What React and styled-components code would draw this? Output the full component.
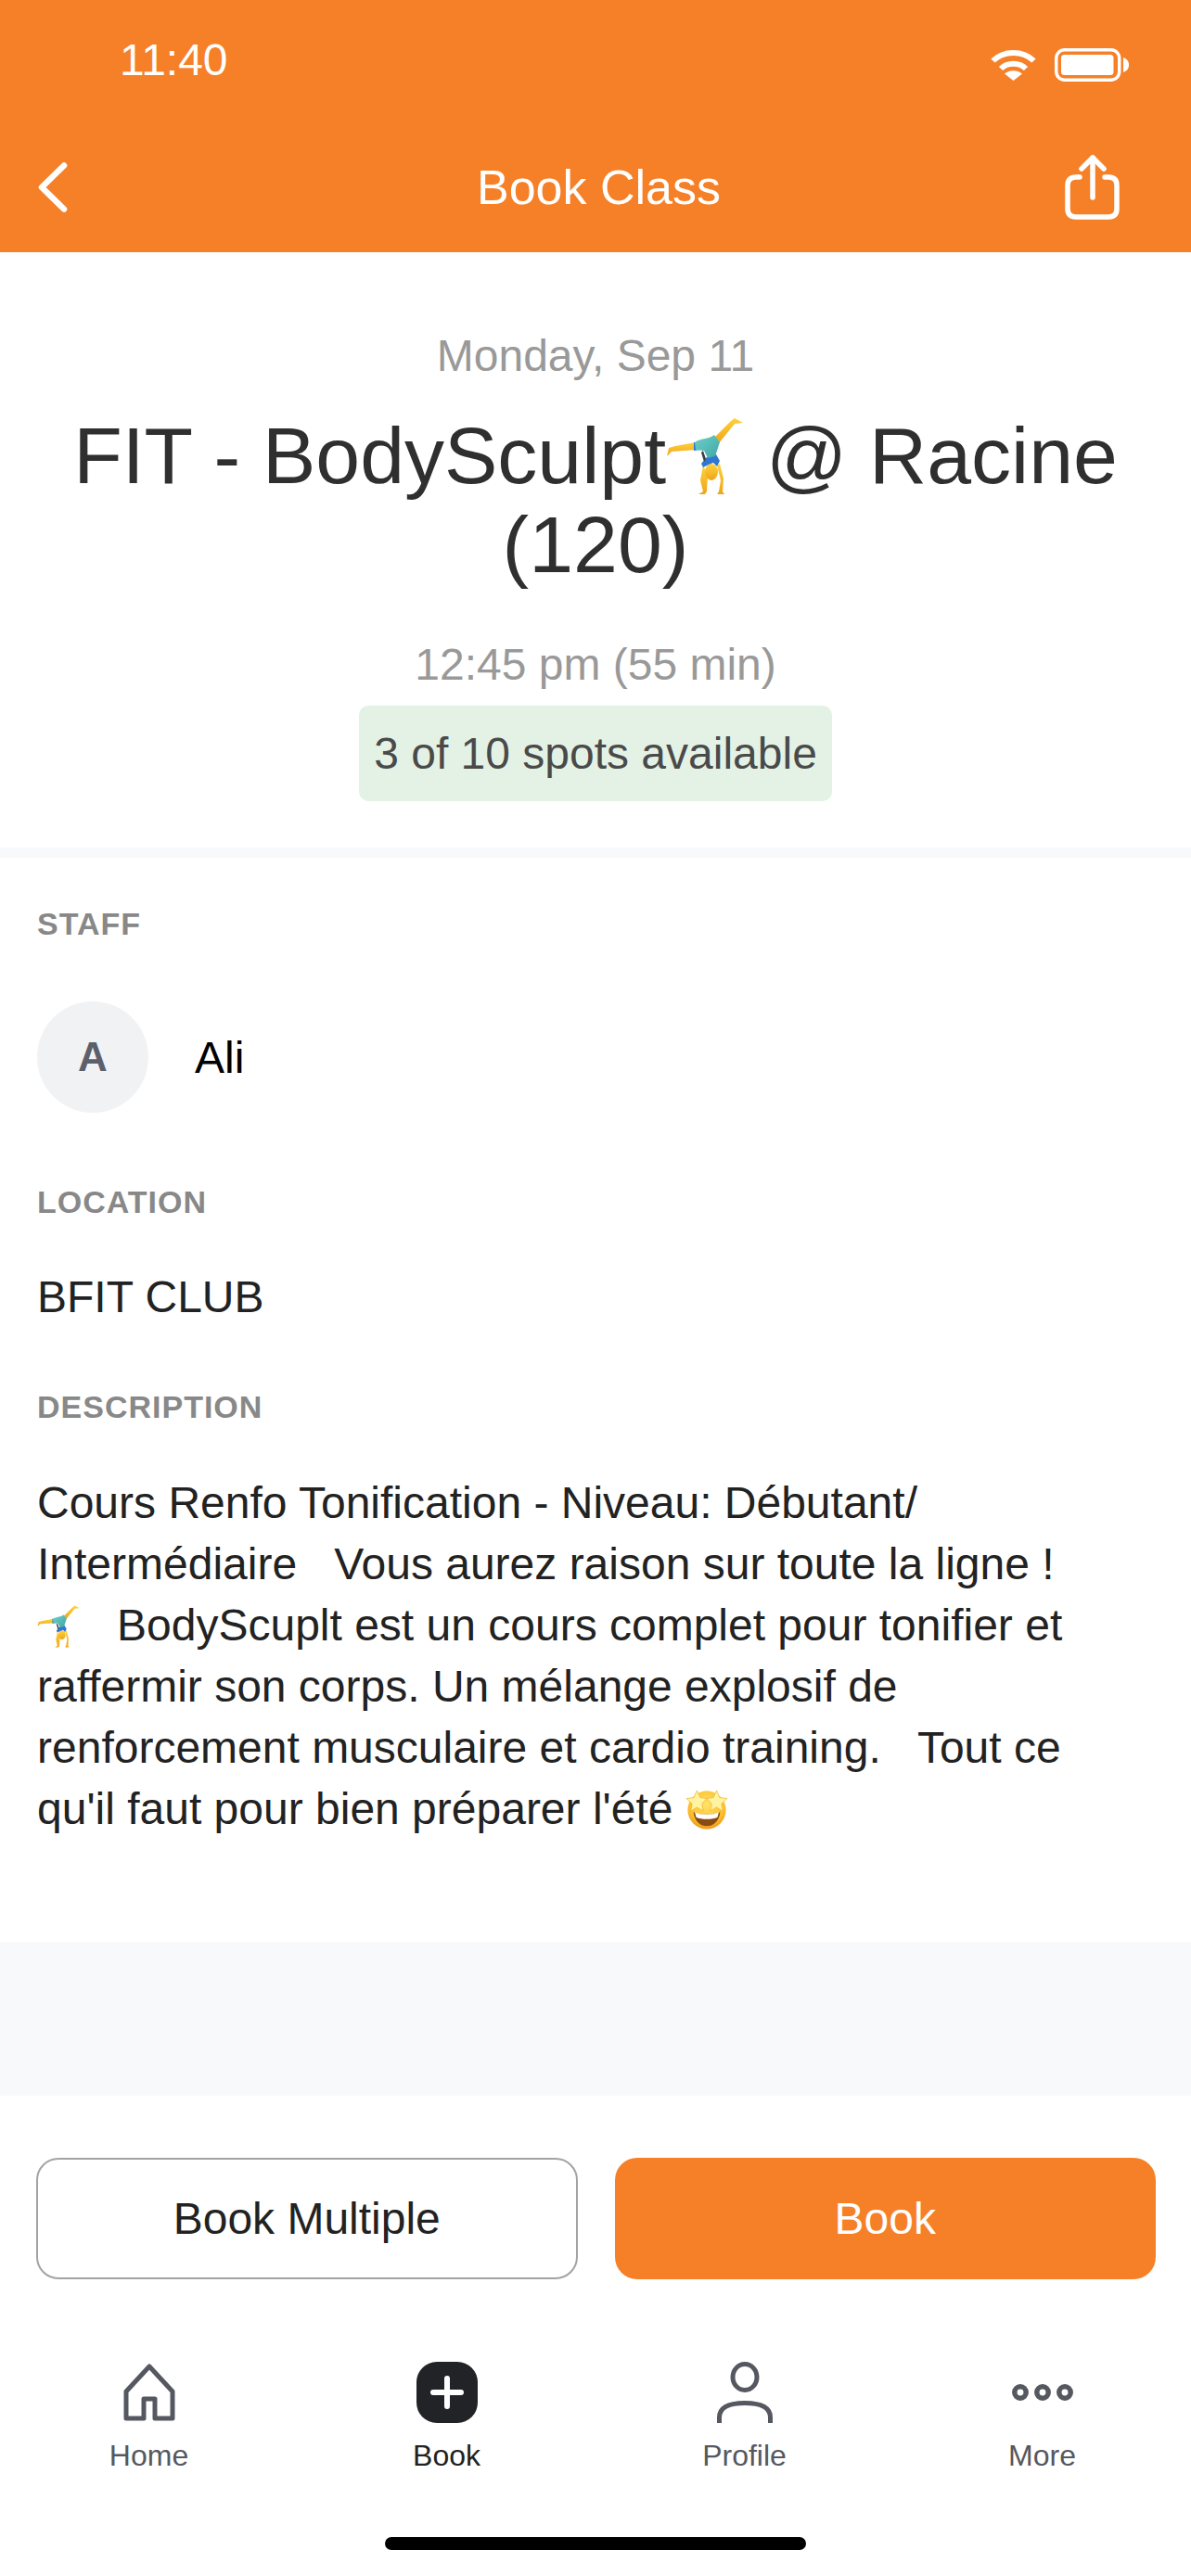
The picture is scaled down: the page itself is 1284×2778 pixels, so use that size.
import React from "react";
import styled, { createGlobalStyle } from "styled-components";

const Global = createGlobalStyle`
  html, body { margin: 0; padding: 0; background: #fff; }
  * { box-sizing: border-box; }
  body { font-family: "Liberation Sans", Arial, sans-serif; }
`;

const Page = styled.div`
  width: 1284px;
  height: 2778px;
  display: flex;
  flex-direction: column;
  background: #fff;
  overflow: hidden;
`;

const Header = styled.header`
  height: 272px;
  background: #f68028;
  color: #fff;
  display: flex;
  flex-direction: column;
`;

const StatusBar = styled.div`
  height: 132px;
  padding: 40px 67px 0 129px;
  display: flex;
  justify-content: space-between;
  align-items: flex-start;
`;

const Time = styled.span`
  font-size: 48px;
  line-height: 50px;
`;

const StatusIcons = styled.div`
  display: flex;
  align-items: center;
  gap: 20px;
  padding-top: 12px;
`;

const NavBar = styled.nav`
  flex: 1;
  display: grid;
  grid-template-columns: 1fr auto 1fr;
  align-items: center;
  padding: 0 34px 0 41px;
`;

const NavTitle = styled.h1`
  margin: 0;
  font-size: 52px;
  font-weight: 400;
  line-height: 60px;
`;

const NavSlot = styled.div`
  display: flex;
  justify-content: ${(p) => (p.$end ? "flex-end" : "flex-start")};
  padding-right: ${(p) => (p.$end ? 43 : 0)}px;
`;

const Hero = styled.section`
  padding: 84px 20px 50px;
  display: flex;
  flex-direction: column;
  align-items: center;
  text-align: center;
`;

const Muted = styled.div`
  font-size: 48px;
  line-height: 56px;
  color: #999;
  margin-top: ${(p) => p.$top || 0}px;
`;

const ClassTitle = styled.h2`
  margin: 31px 0 0;
  font-size: 86px;
  font-weight: 400;
  line-height: 96px;
  color: #2f2f2f;
`;

const Spots = styled.div`
  margin-top: 16px;
  height: 103px;
  width: 510px;
  border-radius: 10px;
  background: #e4f2e5;
  color: #4a4a4a;
  font-size: 48px;
  display: flex;
  align-items: center;
  justify-content: center;
`;

const Divider = styled.div`
  height: 11px;
  background: #f8f9fb;
`;

const Details = styled.section`
  padding: 51px 40px 110px;
  display: flex;
  flex-direction: column;
`;

const Label = styled.div`
  font-size: 34px;
  line-height: 40px;
  font-weight: 700;
  letter-spacing: 1px;
  color: #888;
  margin-top: ${(p) => p.$top || 0}px;
`;

const StaffRow = styled.div`
  margin-top: 64px;
  display: flex;
  align-items: center;
  gap: 50px;
`;

const Avatar = styled.div`
  width: 120px;
  height: 120px;
  border-radius: 50%;
  background: #f1f2f4;
  color: #5c606a;
  font-size: 44px;
  font-weight: 700;
  display: flex;
  align-items: center;
  justify-content: center;
`;

const StaffName = styled.span`
  font-size: 48px;
  color: #000;
`;

const Value = styled.div`
  margin-top: 53px;
  font-size: 48px;
  line-height: 60px;
  color: #222;
`;

const Paragraph = styled.p`
  margin: 51px 0 0;
  font-size: 48px;
  line-height: 66px;
  color: #222;
  white-space: pre;
`;

const EmojiIcon = styled.svg`
  display: inline-block;
  width: ${(p) => p.$size}px;
  height: ${(p) => p.$size}px;
  vertical-align: ${(p) => p.$align}px;
`;

const Filler = styled.div`
  height: 166px;
  background: #f8f9fb;
`;

const Actions = styled.div`
  padding: 67px 38px 0 39px;
  display: grid;
  grid-template-columns: 1fr 1fr;
  gap: 40px;
`;

const ActionButton = styled.button`
  height: 131px;
  border-radius: 24px;
  font-family: inherit;
  font-size: 48px;
  color: ${(p) => (p.$primary ? "#fff" : "#222")};
  background: ${(p) => (p.$primary ? "#f68028" : "#fff")};
  border: ${(p) => (p.$primary ? "none" : "2px solid #a3a3a3")};
`;

const TabBar = styled.div`
  margin-top: 89px;
  display: grid;
  grid-template-columns: repeat(4, 321px);
`;

const Tab = styled.div`
  display: flex;
  flex-direction: column;
  align-items: center;
  gap: 17px;
  color: ${(p) => (p.$active ? "#222" : "#555860")};
`;

const TabIconSlot = styled.div`
  height: 66px;
  display: flex;
  align-items: center;
  justify-content: center;
`;

const TabLabel = styled.span`
  font-size: 32px;
  line-height: 36px;
`;

const HomeIndicator = styled.div`
  width: 454px;
  height: 14px;
  border-radius: 7px;
  background: #000;
  margin: 70px auto 0;
`;

const Gymnast = ({ size, align }) => (
  <EmojiIcon $size={size} $align={align} viewBox="0 0 84 84" role="img" aria-label="person cartwheeling">
    <defs>
      <linearGradient id="skin" x1="0" y1="0" x2="0" y2="1">
        <stop offset="0" stopColor="#ffd23c" />
        <stop offset="1" stopColor="#eea51a" />
      </linearGradient>
      <linearGradient id="suit" x1="0" y1="0" x2="1" y2="1">
        <stop offset="0" stopColor="#6fd0c8" />
        <stop offset="1" stopColor="#3fa7a6" />
      </linearGradient>
    </defs>
    <path d="M52 22 L70 4 L74 1 L83 6 L74 7 L57 28 Z" fill="url(#skin)" />
    <path d="M32 27 L10 31 L3 33 L1 42 L6 37 L33 35 Z" fill="url(#skin)" />
    <path d="M40 52 L37 68 L40 80 L35 83 L42 83 L44 80 L45 62 Z" fill="url(#skin)" />
    <path d="M55 52 L59 68 L57 80 L55 83 L63 83 L61 80 L62 66 L58 50 Z" fill="url(#skin)" />
    <ellipse cx="49" cy="59" rx="7" ry="9" fill="url(#skin)" />
    <path d="M44 43 L38 50 L40 54 L46 51 L51 49 L55 53 L58 47 L54 40 Z" fill="#2f77d0" />
    <path d="M30 27 L30 36 L37 35 L34 27 Z" fill="#2f77d0" />
    <path d="M31 27 C38 22 46 24 52 19 L58 27 L53 42 L45 44 L41 36 L32 35 Z" fill="url(#suit)" />
    <path d="M40 36 L43 45 L41 48 L38 38 Z" fill="#3c3f44" />
  </EmojiIcon>
);

const StarStruck = ({ size, align }) => (
  <EmojiIcon $size={size} $align={align} viewBox="0 0 48 48" role="img" aria-label="star-struck">
    <defs>
      <radialGradient id="face" cx="0.5" cy="0.35" r="0.7">
        <stop offset="0" stopColor="#ffe46a" />
        <stop offset="0.7" stopColor="#fbbd2c" />
        <stop offset="1" stopColor="#ea8a12" />
      </radialGradient>
    </defs>
    <circle cx="24" cy="25" r="21.5" fill="url(#face)" />
    <path d="M9 27 C15 31 33 31 39 27 C38 38 31 43 24 43 C17 43 10 38 9 27 Z" fill="#8a4b10" />
    <path d="M10.5 27.5 C16 31 32 31 37.5 27.5 L36 33 C30 36 18 36 12 33 Z" fill="#fff" />
    <path d="M13 3 L16.5 11 L24 12 L18.5 18 L20 26 L13 22 L6 26 L7.5 18 L1 12 L9.5 11 Z" fill="#fff3a0" stroke="#f5b82e" strokeWidth="0.8" />
    <path d="M35 3 L38.5 11 L47 12 L40.5 18 L42 26 L35 22 L28 26 L29.5 18 L24 12 L31.5 11 Z" fill="#fff3a0" stroke="#f5b82e" strokeWidth="0.8" />
  </EmojiIcon>
);

const Wifi = () => (
  <svg width="49" height="34" viewBox="0 0 49 34" fill="none" stroke="#fff" strokeWidth="6">
    <path d="M2.5 12.5 C14 1 35 1 46.5 12.5" />
    <path d="M11 21 C18 14 31 14 38 21" />
    <path d="M24.5 34 L15 26.5 C20 22 29 22 34 26.5 Z" fill="#fff" stroke="none" />
  </svg>
);

const Battery = () => (
  <svg width="80" height="36" viewBox="0 0 80 36" fill="none">
    <rect x="1.75" y="1.75" width="68" height="32.5" rx="9" stroke="#fff" strokeWidth="3.5" />
    <rect x="7" y="7" width="56.5" height="22" rx="3.5" fill="#fff" />
    <path d="M74 10 C79 12 80 15 80 18 C80 21 79 24 74 26 Z" fill="#fff" />
  </svg>
);

const Chevron = () => (
  <svg width="32" height="54" viewBox="0 0 32 54" fill="none" stroke="#fff" strokeWidth="6.5" strokeLinecap="round" strokeLinejoin="round">
    <path d="M28 3.5 L4 27 L28 50.5" />
  </svg>
);

const Share = () => (
  <svg width="59" height="70" viewBox="0 0 59 70" fill="none" stroke="#fff" strokeWidth="5.5" strokeLinecap="round" strokeLinejoin="round">
    <path d="M30 3 V46" />
    <path d="M18 15 L30 3 L42 15" />
    <path d="M16 24 H12 C6 24 3 27 3 33 V58 C3 64 6 67 12 67 H47 C53 67 56 64 56 58 V33 C56 27 53 24 47 24 H43" />
  </svg>
);

const HomeIcon = () => (
  <svg width="56" height="62" viewBox="0 0 56 62" fill="none" stroke="#555860" strokeWidth="5" strokeLinejoin="round">
    <path d="M28 3 L3 30 V59 H22 V38 H34 V59 H53 V30 Z" />
  </svg>
);

const BookIcon = () => (
  <svg width="66" height="66" viewBox="0 0 66 66">
    <rect width="66" height="66" rx="22" fill="#222327" />
    <path d="M33 18 V48 M18 33 H48" stroke="#fff" strokeWidth="6" strokeLinecap="round" />
  </svg>
);

const ProfileIcon = () => (
  <svg width="60" height="66" viewBox="0 0 60 66" fill="none" stroke="#555860" strokeWidth="5">
    <ellipse cx="30" cy="16.5" rx="13" ry="14" />
    <path d="M2.5 66 V60 C2.5 50 12 44.5 30 44.5 C48 44.5 57.5 50 57.5 60 V66" />
  </svg>
);

const MoreIcon = () => (
  <svg width="66" height="18" viewBox="0 0 66 18" fill="none" stroke="#555860" strokeWidth="5.5">
    <circle cx="9" cy="9" r="6.2" />
    <circle cx="33" cy="9" r="6.2" />
    <circle cx="57" cy="9" r="6.2" />
  </svg>
);

const tabs = [
  { label: "Home", icon: <HomeIcon /> },
  { label: "Book", icon: <BookIcon />, active: true },
  { label: "Profile", icon: <ProfileIcon /> },
  { label: "More", icon: <MoreIcon /> },
];

export default function App() {
  return (
    <Page>
      <Global />
      <Header>
        <StatusBar>
          <Time>11:40</Time>
          <StatusIcons>
            <Wifi />
            <Battery />
          </StatusIcons>
        </StatusBar>
        <NavBar>
          <NavSlot>
            <Chevron />
          </NavSlot>
          <NavTitle>Book Class</NavTitle>
          <NavSlot $end>
            <Share />
          </NavSlot>
        </NavBar>
      </Header>

      <Hero>
        <Muted>Monday, Sep 11</Muted>
        <ClassTitle>
          FIT - BodySculpt
          <Gymnast size={84} align={-13} /> @ Racine
          <br />
          (120)
        </ClassTitle>
        <Muted $top={54}>12:45 pm (55 min)</Muted>
        <Spots>3 of 10 spots available</Spots>
      </Hero>
      <Divider />

      <Details>
        <Label>STAFF</Label>
        <StaffRow>
          <Avatar>A</Avatar>
          <StaffName>Ali</StaffName>
        </StaffRow>
        <Label $top={76}>LOCATION</Label>
        <Value>BFIT CLUB</Value>
        <Label $top={68}>DESCRIPTION</Label>
        <Paragraph>
          {"Cours Renfo Tonification - Niveau: Débutant/\nIntermédiaire   Vous aurez raison sur toute la ligne !\n"}
          <Gymnast size={46} align={-8} />
          {"   BodyScuplt est un cours complet pour tonifier et\nraffermir son corps. Un mélange explosif de\nrenforcement musculaire et cardio training.   Tout ce\nqu'il faut pour bien préparer l'été "}
          <StarStruck size={46} align={-7} />
        </Paragraph>
      </Details>

      <Filler />

      <Actions>
        <ActionButton>Book Multiple</ActionButton>
        <ActionButton $primary>Book</ActionButton>
      </Actions>

      <TabBar>
        {tabs.map((t) => (
          <Tab key={t.label} $active={t.active}>
            <TabIconSlot>{t.icon}</TabIconSlot>
            <TabLabel>{t.label}</TabLabel>
          </Tab>
        ))}
      </TabBar>
      <HomeIndicator />
    </Page>
  );
}
